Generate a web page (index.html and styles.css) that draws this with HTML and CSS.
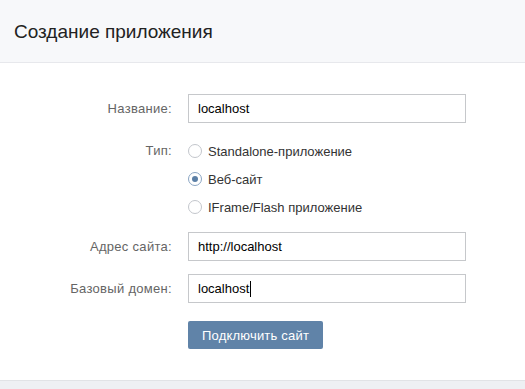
FILE: index.html
```html
<!DOCTYPE html>
<html>
    <head>
        <meta charset="UTF-8">
        <title>Создание приложения</title>
        <link rel="stylesheet" href="styles.css">
    </head>
    <body>
        <div class="page_header">Создание приложения</div>
        <div class="page_body">
            <div class="form_row">
                <label class="form_label" for="app_name">Название:</label>
                <input class="form_input" type="text" id="app_name" value="localhost">
            </div>
            <div class="form_row type_row">
                <div class="form_label">Тип:</div>
                <div class="radio_list">
                    <div class="radio_item"><span class="radio_btn"></span>Standalone-приложение</div>
                    <div class="radio_item"><span class="radio_btn on"></span>Веб-сайт</div>
                    <div class="radio_item"><span class="radio_btn"></span>IFrame/Flash приложение</div>
                </div>
            </div>
            <div class="form_row site_row">
                <label class="form_label" for="site_url">Адрес сайта:</label>
                <input class="form_input" type="text" id="site_url" value="http://localhost">
            </div>
            <div class="form_row domain_row">
                <label class="form_label" for="site_domain">Базовый домен:</label>
                <div class="form_input fake_input">localhost<span class="caret"></span></div>
            </div>
            <div class="form_row">
                <div></div>
                <button class="flat_button">Подключить сайт</button>
            </div>
        </div>
        <div class="page_footer"></div>
    </body>
</html>
```

FILE: styles.css
```css
body{
    margin: 0;
    background-color: white;
    font-family: 'Liberation Sans', Arial, sans-serif;
    font-size: 13px;
    color: #000;
}
.page_header{
    height: 63px;
    display: flex;
    align-items: center;
    padding-left: 14px;
    padding-top: 1px;
    box-sizing: border-box;
    background-color: #f7f8fa;
    border-bottom: 1px solid #e7e8ec;
    font-size: 19px;
    color: #222;
}
.page_body{
    padding: 31px 0 31px 0;
}
.form_row{
    display: grid;
    grid-template-columns: 172px 278px;
    column-gap: 16px;
    align-items: center;
    margin-bottom: 14px;
}
.form_row:last-child{
    margin-bottom: 0;
}
.form_label{
    text-align: right;
    color: #656565;
    letter-spacing: 0.3px;
}
.form_input{
    box-sizing: border-box;
    height: 29px;
    width: 278px;
    margin: 0;
    padding: 0 9px;
    border: 1px solid #c6c8cb;
    border-radius: 0;
    font-family: 'Liberation Sans', Arial, sans-serif;
    font-size: 13px;
    color: #000;
    outline: none;
}
.fake_input{
    display: flex;
    align-items: center;
}
.caret{
    display: inline-block;
    width: 1px;
    height: 16px;
    background-color: #000;
    margin-left: 1px;
}
.type_row{
    align-items: start;
    margin-bottom: 11px;
}
.type_row .form_label{
    line-height: 28px;
}
.site_row{
    margin-bottom: 13px;
}
.domain_row{
    margin-bottom: 18px;
}
.radio_item{
    height: 28px;
    display: flex;
    align-items: center;
    color: #333;
}
.radio_btn{
    box-sizing: border-box;
    width: 14px;
    height: 14px;
    border: 1px solid #c3c6cc;
    border-radius: 50%;
    margin-right: 6px;
    display: flex;
    align-items: center;
    justify-content: center;
    background-color: white;
}
.radio_btn.on{
    border-color: #8aa5c3;
}
.radio_btn.on::after{
    content: "";
    width: 6px;
    height: 6px;
    border-radius: 50%;
    background-color: #5b7fa6;
}
.flat_button{
    display: block;
    width: 135px;
    height: 28px;
    border: none;
    border-radius: 2px;
    background-color: #6083a8;
    color: white;
    font-family: 'Liberation Sans', Arial, sans-serif;
    font-size: 13px;
    letter-spacing: 0.2px;
    padding: 0;
    cursor: pointer;
}
.page_footer{
    height: 20px;
    background-color: #eef0f3;
    border-top: 1px solid #e1e3e6;
}
```
